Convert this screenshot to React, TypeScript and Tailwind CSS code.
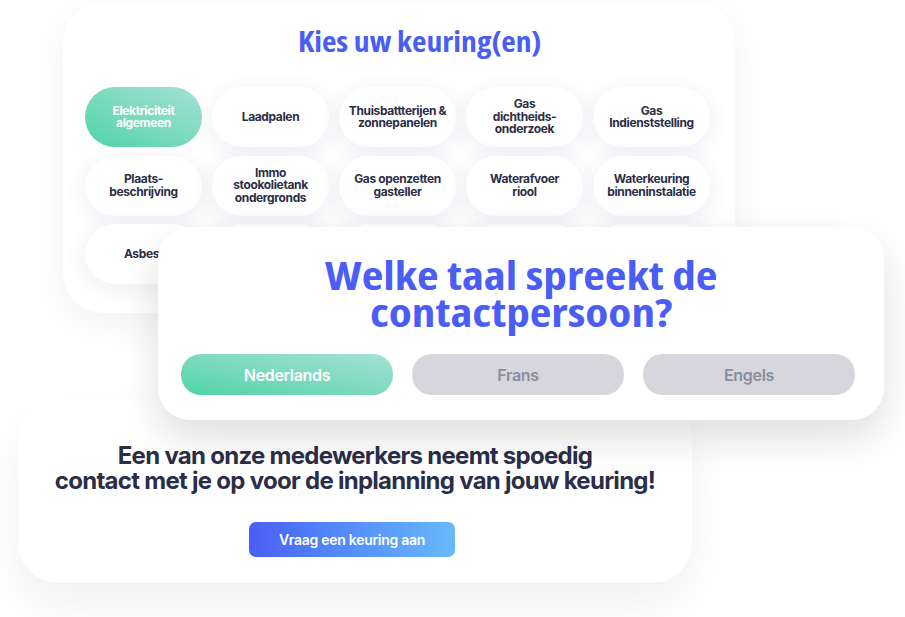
import React from "react";

const chips: string[][] = [
  ["Elektriciteit", "algemeen"],
  ["Laadpalen"],
  ["Thuisbattterijen &", "zonnepanelen"],
  ["Gas", "dichtheids-", "onderzoek"],
  ["Gas", "Indienststelling"],
  ["Plaats-", "beschrijving"],
  ["Immo", "stookolietank", "ondergronds"],
  ["Gas openzetten", "gasteller"],
  ["Waterafvoer", "riool"],
  ["Waterkeuring", "binneninstalatie"],
  ["Asbest"],
  [],
  [],
  [],
  [],
];

const talen = ["Nederlands", "Frans", "Engels"];

export default function App() {
  return (
    <div className="relative w-[905px] h-[617px] overflow-hidden bg-white font-['Inter',sans-serif]">
      {/* keuringen */}
      <div className="absolute left-[63px] top-[3px] w-[672px] h-[310px] rounded-[40px] bg-white shadow-[0_10px_40px_rgba(40,40,90,0.06)] px-[22px]">
        <h2 className="pt-[20px] pl-[42px] text-center text-[28px] leading-[36px] font-bold text-[#4a5ef5] font-['Open_Sans',sans-serif] font-stretch-condensed">
          <span className="inline-block scale-x-[1.13]">Kies uw keuring(en)</span>
        </h2>
        <div className="mt-[28px] grid grid-cols-[repeat(5,117px)] gap-x-[10px] gap-y-[8.5px]">
          {chips.map((lines, i) => (
            <div
              key={i}
              className={`h-[60px] rounded-[30px] flex items-center justify-center text-center text-[12px] leading-[12.5px] font-bold tracking-[-0.03em] whitespace-nowrap ${
                i === 0
                  ? "bg-gradient-to-tr from-[#4cd3a8] to-[#a3e1d5] text-white"
                  : "bg-white text-[#2b2e47] shadow-[0_4px_24px_rgba(60,60,130,0.09)]"
              }`}
            >
              {lines.length > 0 && (
                <p>
                  {lines.map((l, j) => (
                    <React.Fragment key={l}>
                      {j > 0 && <br />}
                      {l}
                    </React.Fragment>
                  ))}
                </p>
              )}
            </div>
          ))}
        </div>
      </div>

      {/* bevestiging */}
      <div className="absolute left-[18px] top-[400px] w-[674px] h-[183px] rounded-[40px] bg-white shadow-[0_22px_45px_rgba(0,0,0,0.06)] flex flex-col items-center">
        <p className="mt-[43px] text-center text-[24px] leading-[25px] font-bold tracking-[-0.03em] text-[#2b2e47]">
          Een van onze medewerkers neemt spoedig
          <br />
          contact met je op voor de inplanning van jouw keuring!
        </p>
        <button className="mt-[29px] mr-[6px] w-[206px] h-[35px] rounded-[7px] bg-gradient-to-r from-[#4a5ef5] to-[#68b9fa] text-white text-[14px] font-semibold tracking-[-0.02em]">
          Vraag een keuring aan
        </button>
      </div>

      {/* taal */}
      <div className="absolute left-[158px] top-[227px] w-[726px] h-[193px] rounded-[32px] bg-white shadow-[0_18px_40px_rgba(0,0,0,0.13)] px-[23px] pt-[29px]">
        <h2 className="text-center text-[40px] leading-[37px] font-bold text-[#4a5ef5] font-['Open_Sans',sans-serif] font-stretch-condensed">
          <span className="inline-block scale-x-[1.18]">
            Welke taal spreekt de
            <br />
            contactpersoon?
          </span>
        </h2>
        <div className="mt-[24px] grid grid-cols-3 gap-[19px] pr-[6px]">
          {talen.map((t, i) => (
            <div
              key={t}
              className={`h-[41px] rounded-[20px] flex items-center justify-center text-[16px] font-semibold tracking-[-0.02em] ${
                i === 0
                  ? "bg-gradient-to-tr from-[#4cd3a8] to-[#a3e1d5] text-white"
                  : "bg-[#d6d6dc] text-[#8b8d9e]"
              }`}
            >
              {t}
            </div>
          ))}
        </div>
      </div>
    </div>
  );
}
